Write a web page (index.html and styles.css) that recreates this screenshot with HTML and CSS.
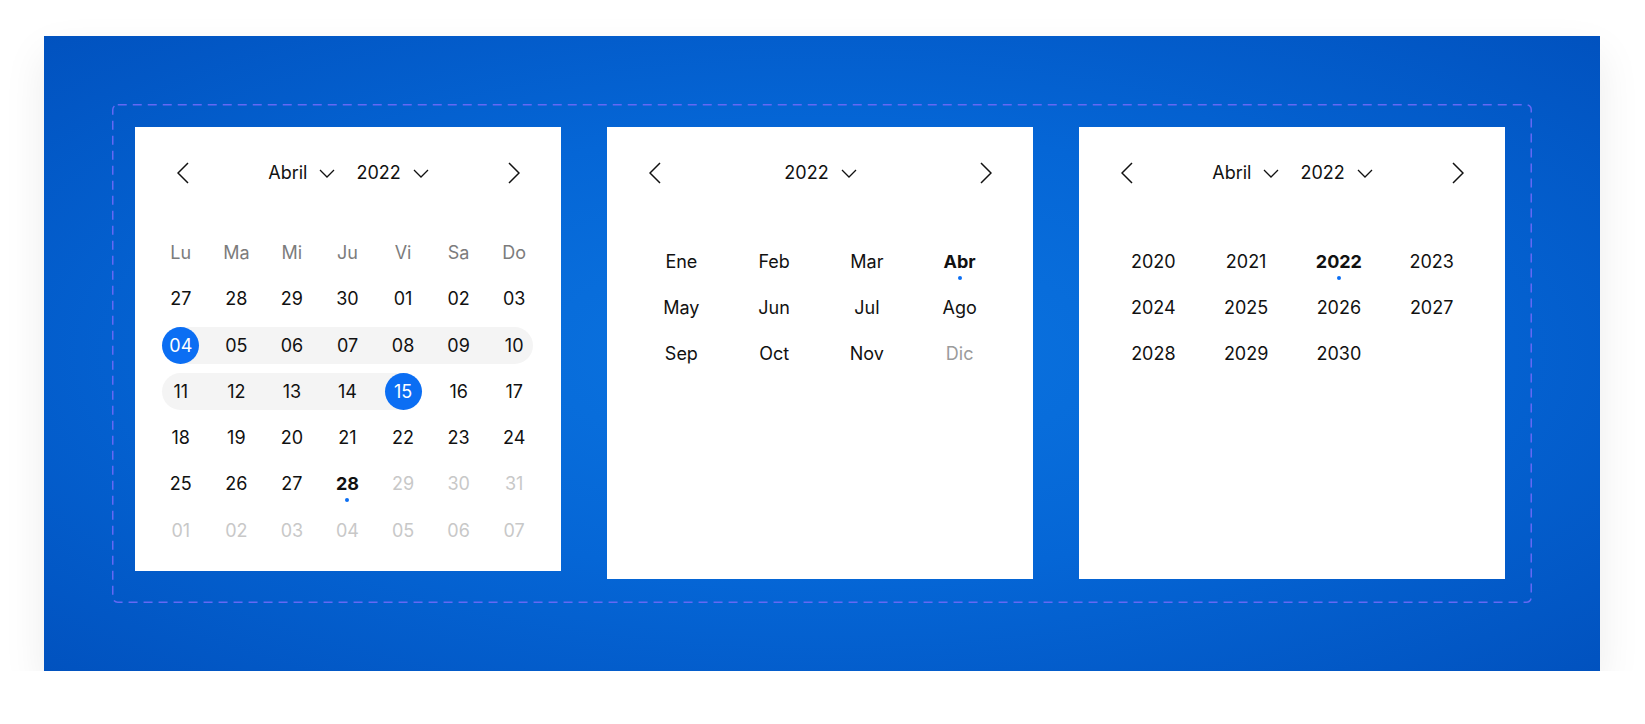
FILE: index.html
```html
<!DOCTYPE html>
<html lang="es">

<head>
    <meta charset="UTF-8">
    <title>Calendario</title>

    <link rel="stylesheet" href="styles.css">

</head>

<body>
    <main class="panel">
        <div class="frame">
            <!-- borde discontinuo del contenedor -->
            <svg class="frame-border" aria-hidden="true">
                <rect x="0.75" y="0.75" width="1418.5" height="497.5" rx="5" ry="5" />
            </svg>

            <!-- vista de días -->
            <section class="card card-days">
                <header class="cal-head">
                    <button class="nav-btn" aria-label="Anterior">
                        <svg width="12" height="22" viewBox="0 0 12 22"><path d="M11 1 1 11l10 10" /></svg>
                    </button>
                    <div class="pickers">
                        <button class="picker">Abril
                            <svg width="16" height="9" viewBox="0 0 16 9"><path d="M1 1l7 7 7-7" /></svg>
                        </button>
                        <button class="picker">2022
                            <svg width="16" height="9" viewBox="0 0 16 9"><path d="M1 1l7 7 7-7" /></svg>
                        </button>
                    </div>
                    <button class="nav-btn" aria-label="Siguiente">
                        <svg width="12" height="22" viewBox="0 0 12 22"><path d="M1 1l10 10L1 21" /></svg>
                    </button>
                </header>

                <div class="days">
                    <span class="wd">Lu</span><span class="wd">Ma</span><span class="wd">Mi</span><span class="wd">Ju</span><span class="wd">Vi</span><span class="wd">Sa</span><span class="wd">Do</span>

                    <span class="day">27</span><span class="day">28</span><span class="day">29</span><span class="day">30</span><span class="day">01</span><span class="day">02</span><span class="day">03</span>

                    <span class="day sel range-start"><b>04</b></span>
                    <span class="day in-range"><b>05</b></span>
                    <span class="day in-range"><b>06</b></span>
                    <span class="day in-range"><b>07</b></span>
                    <span class="day in-range"><b>08</b></span>
                    <span class="day in-range"><b>09</b></span>
                    <span class="day in-range row-end"><b>10</b></span>

                    <span class="day in-range row-start"><b>11</b></span>
                    <span class="day in-range"><b>12</b></span>
                    <span class="day in-range"><b>13</b></span>
                    <span class="day in-range"><b>14</b></span>
                    <span class="day sel range-end"><b>15</b></span>
                    <span class="day">16</span>
                    <span class="day">17</span>

                    <span class="day">18</span><span class="day">19</span><span class="day">20</span><span class="day">21</span><span class="day">22</span><span class="day">23</span><span class="day">24</span>

                    <span class="day">25</span><span class="day">26</span><span class="day">27</span><span class="day today">28</span><span class="day off">29</span><span class="day off">30</span><span class="day off">31</span>

                    <span class="day off">01</span><span class="day off">02</span><span class="day off">03</span><span class="day off">04</span><span class="day off">05</span><span class="day off">06</span><span class="day off">07</span>
                </div>
            </section>

            <!-- vista de meses -->
            <section class="card card-tall">
                <header class="cal-head">
                    <button class="nav-btn" aria-label="Anterior">
                        <svg width="12" height="22" viewBox="0 0 12 22"><path d="M11 1 1 11l10 10" /></svg>
                    </button>
                    <div class="pickers">
                        <button class="picker">2022
                            <svg width="16" height="9" viewBox="0 0 16 9"><path d="M1 1l7 7 7-7" /></svg>
                        </button>
                    </div>
                    <button class="nav-btn" aria-label="Siguiente">
                        <svg width="12" height="22" viewBox="0 0 12 22"><path d="M1 1l10 10L1 21" /></svg>
                    </button>
                </header>

                <div class="grid4">
                    <span class="item">Ene</span><span class="item">Feb</span><span class="item">Mar</span><span class="item today">Abr</span>
                    <span class="item">May</span><span class="item">Jun</span><span class="item">Jul</span><span class="item">Ago</span>
                    <span class="item">Sep</span><span class="item">Oct</span><span class="item">Nov</span><span class="item muted">Dic</span>
                </div>
            </section>

            <!-- vista de años -->
            <section class="card card-tall">
                <header class="cal-head">
                    <button class="nav-btn" aria-label="Anterior">
                        <svg width="12" height="22" viewBox="0 0 12 22"><path d="M11 1 1 11l10 10" /></svg>
                    </button>
                    <div class="pickers">
                        <button class="picker">Abril
                            <svg width="16" height="9" viewBox="0 0 16 9"><path d="M1 1l7 7 7-7" /></svg>
                        </button>
                        <button class="picker">2022
                            <svg width="16" height="9" viewBox="0 0 16 9"><path d="M1 1l7 7 7-7" /></svg>
                        </button>
                    </div>
                    <button class="nav-btn" aria-label="Siguiente">
                        <svg width="12" height="22" viewBox="0 0 12 22"><path d="M1 1l10 10L1 21" /></svg>
                    </button>
                </header>

                <div class="grid4">
                    <span class="item">2020</span><span class="item">2021</span><span class="item today">2022</span><span class="item">2023</span>
                    <span class="item">2024</span><span class="item">2025</span><span class="item">2026</span><span class="item">2027</span>
                    <span class="item">2028</span><span class="item">2029</span><span class="item">2030</span>
                </div>
            </section>

        </div>
    </main>
</body></html>
```

FILE: styles.css
```css
body {
    margin: 0;
    background: #fff;
    font-family: "Inter", "Noto Sans", sans-serif;
    color: #111;
}

.panel {
    box-sizing: border-box;
    width: 1556px;
    height: 635px;
    margin: 36px 0 0 44px;
    padding: 68px;
    background: radial-gradient(ellipse at 50% 50%, #0b74e0 0%, #0566d6 50%, #0152bf 100%);
    box-shadow: 0 18px 40px rgba(0, 0, 0, 0.08);
}

.frame {
    position: relative;
    box-sizing: border-box;
    width: 1420px;
    height: 499px;
    display: flex;
    align-items: flex-start;
    gap: 46px;
    padding: 23px 27px 0 23px;
}

.frame-border {
    position: absolute;
    top: 0;
    left: 0;
    width: 1420px;
    height: 499px;
    pointer-events: none;
}

.frame-border rect {
    fill: none;
    stroke: #6468f4;
    stroke-width: 1.5;
    stroke-dasharray: 9 6;
}

.card {
    width: 426px;
    height: 444px;
    flex: none;
    background: #fff;
    box-sizing: border-box;
    padding-top: 34px;
}

.card-tall {
    height: 452px;
}

/* cabecera con flechas y selectores */
.cal-head {
    display: flex;
    justify-content: space-between;
    align-items: center;
    height: 24px;
    padding: 0 41px 0 42px;
}

button {
    border: none;
    background: none;
    padding: 0;
    font: inherit;
    color: inherit;
}

.nav-btn {
    display: flex;
    width: 12px;
}

.nav-btn svg path {
    fill: none;
    stroke: #111;
    stroke-width: 1.5;
}

.pickers {
    display: flex;
    align-items: center;
    gap: 21px;
}

.picker {
    display: flex;
    align-items: center;
    gap: 12px;
    font-size: 18px;
    line-height: 24px;
}

.picker svg path {
    fill: none;
    stroke: #111;
    stroke-width: 1.3;
}

/* días */
.days {
    display: grid;
    grid-template-columns: repeat(7, 1fr);
    grid-auto-rows: 37px;
    row-gap: 9.3px;
    margin-top: 49px;
    padding: 0 19px 0 18px;
    font-size: 18px;
}

.wd,
.day {
    display: flex;
    align-items: center;
    justify-content: center;
    position: relative;
}

.wd {
    color: #7c7c7c;
}

.day b {
    font-weight: 400;
    position: relative;
    z-index: 1;
}

.in-range::before,
.range-start::before,
.range-end::before {
    content: "";
    position: absolute;
    top: 0;
    bottom: 0;
    left: 0;
    right: 0;
    background: #f4f4f4;
}

.range-start::before {
    left: 50%;
}

.range-end::before {
    right: 50%;
}

.row-start::before {
    left: 9px;
    border-radius: 19px 0 0 19px;
}

.row-end::before {
    right: 9px;
    border-radius: 0 19px 19px 0;
}

.sel {
    color: #fff;
}

.sel::after {
    content: "";
    position: absolute;
    width: 37px;
    height: 37px;
    left: calc(50% - 18.5px);
    top: 0;
    border-radius: 50%;
    background: #0b6ef3;
}

.off {
    color: #c8c8c8;
}

.today {
    font-weight: 700;
    position: relative;
}

.today::after {
    content: "";
    position: absolute;
    width: 4px;
    height: 4px;
    border-radius: 50%;
    background: #0b6ef3;
    left: calc(50% - 2px);
    top: calc(50% + 14px);
}

/* meses y años */
.grid4 {
    display: grid;
    grid-template-columns: repeat(4, 1fr);
    grid-auto-rows: 37px;
    row-gap: 9px;
    margin-top: 58px;
    padding: 0 27px 0 28px;
    font-size: 18px;
}

.item {
    display: flex;
    align-items: center;
    justify-content: center;
}

.muted {
    color: #9b9b9b;
}
```
